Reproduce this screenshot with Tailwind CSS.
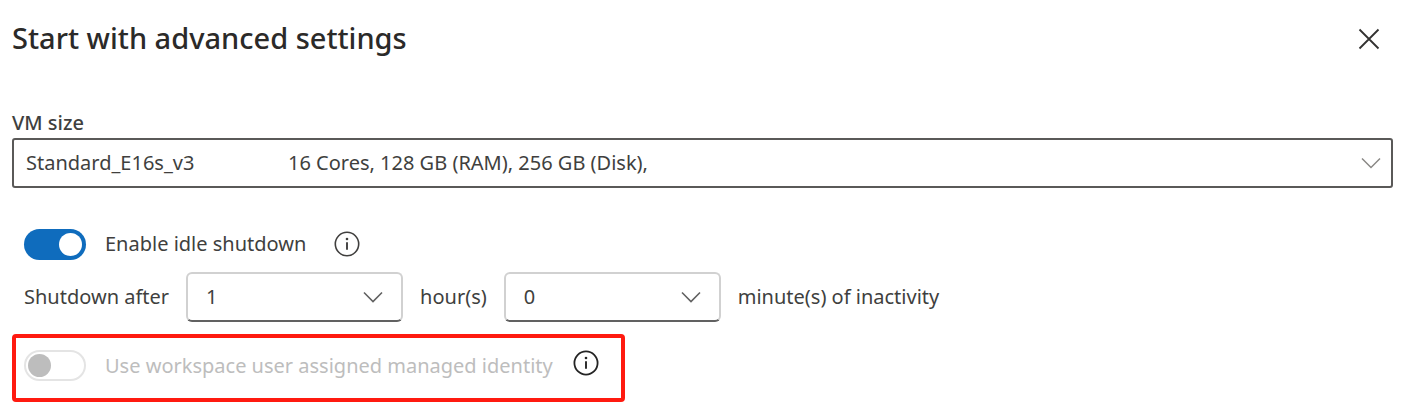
<!DOCTYPE html>
<html lang="en">
<head>
<meta charset="utf-8">
<meta name="viewport" content="width=device-width, initial-scale=1">
<title>Start with advanced settings</title>
<script src="https://cdn.jsdelivr.net/npm/@tailwindcss/browser@4"></script>
</head>
<body class="bg-white font-['Noto_Sans','Open_Sans',sans-serif] text-xl text-[#403f3e]">
<main class="pl-3 pr-2 pt-4">
  <header class="flex h-11 items-center justify-between pr-3">
    <h1 class="text-[29px] font-medium text-[#2b2a29]">Start with advanced settings</h1>
    <button type="button" aria-label="Close" class="text-[#323130]">
      <svg class="size-6" viewBox="0 0 24 24" fill="none" stroke="currentColor" stroke-width="1.8"><path d="M2.5 3.5l19 19M21.5 3.5l-19 19"/></svg>
    </button>
  </header>

  <form>
    <div class="pt-12">
      <label for="vm" class="block h-[30px] font-medium leading-[30px]">VM size</label>
      <div class="grid items-center">
        <select id="vm" class="col-start-1 row-start-1 h-[50px] w-full appearance-none rounded-[3px] border-2 border-[#5a5958] bg-white px-3">
          <option>Standard_E16s_v3&nbsp;&nbsp;&nbsp;&nbsp;&nbsp;&nbsp;&nbsp;&nbsp;&nbsp;&nbsp;&nbsp;&nbsp;&nbsp;&nbsp;&nbsp;&nbsp;&nbsp;&nbsp;16 Cores, 128 GB (RAM), 256 GB (Disk),</option>
        </select>
        <svg class="pointer-events-none col-start-1 row-start-1 mr-3 h-3 w-5 justify-self-end text-[#8a8886]" viewBox="0 0 20 12" fill="none" stroke="currentColor" stroke-width="1.5"><path d="M1 1.5l9 9 9-9"/></svg>
      </div>
    </div>

    <div class="mt-10 flex h-8 items-center pl-3">
      <label class="flex items-center gap-[19px]">
        <input type="checkbox" role="switch" checked class="peer sr-only">
        <span class="flex h-[31px] w-[62px] items-center justify-end rounded-full bg-[#0f6cbd] px-1"><span class="size-[23px] rounded-full bg-white"></span></span>
        <span>Enable idle shutdown</span>
      </label>
      <button type="button" aria-label="About idle shutdown" class="ml-7">
        <svg class="size-[26px]" viewBox="0 0 26 26" fill="none" stroke="currentColor" stroke-width="1.6"><circle cx="13" cy="13" r="11.7"/><path d="M13 11.2v7.6" stroke-width="1.9"/><circle cx="13" cy="8" r="1.3" fill="currentColor" stroke="none"/></svg>
      </button>
    </div>

    <div class="mt-3 flex items-center gap-[17px] pl-3">
      <label for="hours">Shutdown after</label>
      <div class="grid items-center">
        <select id="hours" class="col-start-1 row-start-1 h-[50px] w-[217px] appearance-none rounded-md border-2 border-[#d1d1d1] border-b-[#616161] bg-white px-[18px]"><option>1</option></select>
        <svg class="pointer-events-none col-start-1 row-start-1 mr-5 h-3 w-5 justify-self-end text-[#616161]" viewBox="0 0 20 12" fill="none" stroke="currentColor" stroke-width="1.6"><path d="M1 1.5l9 9 9-9"/></svg>
      </div>
      <label for="hours">hour(s)</label>
      <div class="grid items-center">
        <select id="minutes" class="col-start-1 row-start-1 h-[50px] w-[217px] appearance-none rounded-md border-2 border-[#d1d1d1] border-b-[#616161] bg-white px-[18px]"><option>0</option></select>
        <svg class="pointer-events-none col-start-1 row-start-1 mr-5 h-3 w-5 justify-self-end text-[#616161]" viewBox="0 0 20 12" fill="none" stroke="currentColor" stroke-width="1.6"><path d="M1 1.5l9 9 9-9"/></svg>
      </div>
      <label for="minutes">minute(s) of inactivity</label>
    </div>

    <div class="mt-3 flex w-fit items-start rounded-[4px] border-4 border-[#ff1a10] pt-3 pr-[22px] pb-[17px] pl-2">
      <label class="flex items-center gap-[19px] text-[#bdbdbd]">
        <input type="checkbox" role="switch" disabled class="peer sr-only">
        <span class="flex h-[31px] w-[62px] items-center rounded-full border-2 border-[#e4e4e4] px-[2px]"><span class="size-[23px] rounded-full bg-[#bdbdbd]"></span></span>
        <span>Use workspace user assigned managed identity</span>
      </label>
      <button type="button" aria-label="About managed identity" class="ml-5 text-[#242424]">
        <svg class="size-[26px]" viewBox="0 0 26 26" fill="none" stroke="currentColor" stroke-width="1.8"><circle cx="13" cy="13" r="11.6"/><path d="M13 11.2v7.6" stroke-width="1.9"/><circle cx="13" cy="8" r="1.3" fill="currentColor" stroke="none"/></svg>
      </button>
    </div>
  </form>
</main>
</body>
</html>
